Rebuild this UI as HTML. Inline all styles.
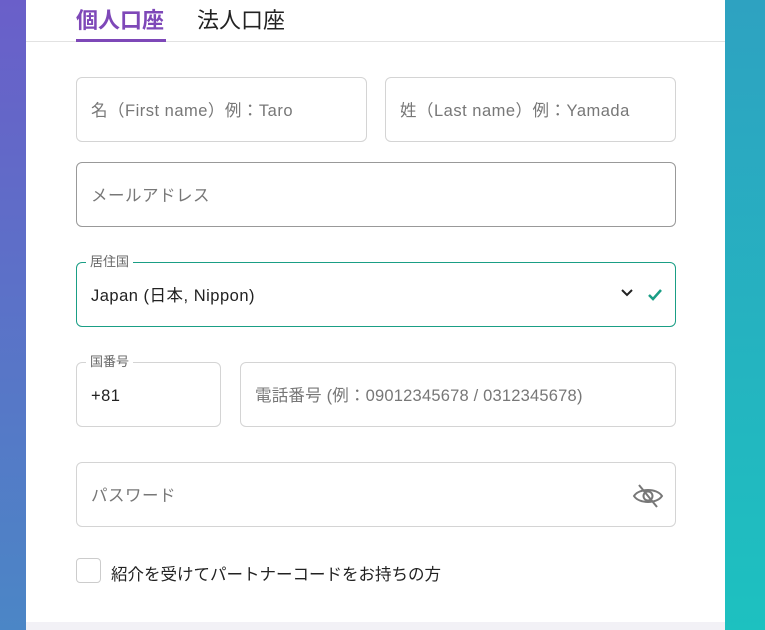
<!DOCTYPE html>
<html><head><meta charset="utf-8"><style>
*{box-sizing:border-box;margin:0;padding:0}
body{width:765px;height:630px;overflow:hidden;position:relative;font-family:"Liberation Sans","Noto Sans CJK JP",sans-serif;background:linear-gradient(180deg,#2ea2c1,#1dc1c0)}
.left{position:absolute;left:0;top:0;width:26px;height:630px;background:linear-gradient(180deg,#6a5fc9,#4b86c6)}
.card{position:absolute;left:26px;top:0;width:699px;height:630px;background:#fff}
.strip{position:absolute;left:26px;top:622px;width:699px;height:8px;background:#f2f1f6}
.tab{position:absolute;top:3px;font-size:22px;color:#222}
.tab.a{color:#7e48b8;font-weight:bold}
.ul{position:absolute;left:76px;top:39px;width:90px;height:3px;background:#7e48b8}
.hr{position:absolute;left:26px;top:41px;width:699px;height:1px;background:#e2e2e2}
.f{position:absolute;border:1px solid #d4d4d4;border-radius:6px;height:65px;font-size:16.5px;letter-spacing:0.5px;color:#777;padding-left:14px;line-height:66px}
.lbl{position:absolute;top:-9px;left:9px;background:#fff;padding:0 4px;font-size:13px;line-height:16px;color:#666;letter-spacing:0}
</style></head><body>
<div class="left"></div>
<div class="card"></div>
<div class="strip"></div>
<div class="tab a" style="left:76px">個人口座</div>
<div class="tab" style="left:197px">法人口座</div>
<div class="hr"></div>
<div class="ul"></div>
<div class="f" style="left:76px;top:77px;width:291px">名（First name）例：Taro</div>
<div class="f" style="left:385px;top:77px;width:291px">姓（Last name）例：Yamada</div>
<div class="f" style="left:76px;top:162px;width:600px;border-color:#999">メールアドレス</div>
<div class="f" style="left:76px;top:262px;width:600px;border-color:#1a9e85;color:#222"><span class="lbl">居住国</span>Japan (日本, Nippon)
<svg style="position:absolute;left:543px;top:25px" width="14" height="10" viewBox="0 0 14 10"><path d="M2 2l5 5 5-5" fill="none" stroke="#222" stroke-width="2"/></svg>
<svg style="position:absolute;left:570px;top:25px" width="16" height="14" viewBox="0 0 16 14"><path d="M2 7l4 4 8-9" fill="none" stroke="#1a9e85" stroke-width="2.5"/></svg></div>
<div class="f" style="left:76px;top:362px;width:145px;color:#222"><span class="lbl">国番号</span>+81</div>
<div class="f" style="left:240px;top:362px;width:436px;letter-spacing:0.2px">電話番号 (例：09012345678 / 0312345678)</div>
<div class="f" style="left:76px;top:462px;width:600px">パスワード
<svg style="position:absolute;left:555px;top:20px" width="32" height="26" viewBox="0 0 32 26"><path d="M2 13C7 5 25 5 30 13C25 21 7 21 2 13Z" fill="none" stroke="#777" stroke-width="2"/><circle cx="16" cy="13" r="4.5" fill="none" stroke="#777" stroke-width="2"/><path d="M7 2l18 22" stroke="#777" stroke-width="2"/></svg></div>
<div style="position:absolute;left:76px;top:558px;width:25px;height:25px;border:1px solid #ccc;border-radius:4px"></div>
<div style="position:absolute;left:111px;top:561px;font-size:16.5px;color:#222">紹介を受けてパートナーコードをお持ちの方</div>
</body></html>
